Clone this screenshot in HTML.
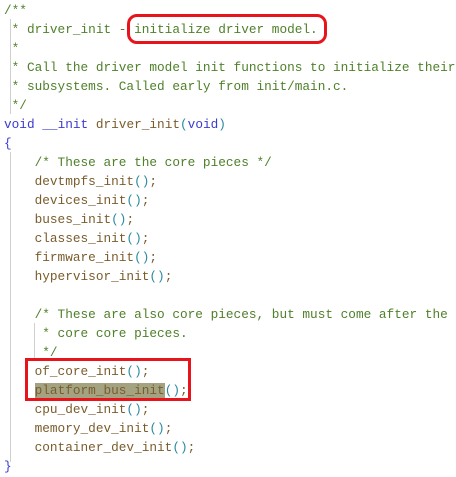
<!DOCTYPE html>
<html><head><meta charset="utf-8">
<style>
html,body{margin:0;padding:0;background:#fff;width:456px;height:477px;overflow:hidden;}
body{position:relative;font-family:"Liberation Mono",monospace;font-size:12.75px;}
.l{position:absolute;left:4px;white-space:pre;height:19px;line-height:19px;color:#7a5c2c;top:1px}
.c{color:#4f802a;}
.k{color:#3b3bd0;}
.p{color:#2a8aa0;}
.g{position:absolute;width:1px;background:#d0d0d0;}
.box{position:absolute;border:3px solid #e8141c;box-sizing:border-box;}
.hl{background:#a3a382;}
</style></head><body>
<div class="g" style="left:10px;top:19px;height:95px"></div>
<div class="g" style="left:10px;top:152px;height:310px"></div>
<div class="g" style="left:34px;top:323px;height:38px"></div>
<div class="l c" style="top:1px">/**</div>
<div class="l c" style="top:20px"> * driver_init - initialize driver model.</div>
<div class="l c" style="top:39px"> *</div>
<div class="l c" style="top:58px"> * Call the driver model init functions to initialize their</div>
<div class="l c" style="top:77px"> * subsystems. Called early from init/main.c.</div>
<div class="l c" style="top:96px"> */</div>
<div class="l" style="top:115px"><span class="k">void</span> <span class="k">__init</span> driver_init<span class="p">(</span><span class="k">void</span><span class="p">)</span></div>
<div class="l k" style="top:134px">{</div>
<div class="l c" style="top:153px">    /* These are the core pieces */</div>
<div class="l" style="top:172px">    devtmpfs_init<span class="p">()</span>;</div>
<div class="l" style="top:191px">    devices_init<span class="p">()</span>;</div>
<div class="l" style="top:210px">    buses_init<span class="p">()</span>;</div>
<div class="l" style="top:229px">    classes_init<span class="p">()</span>;</div>
<div class="l" style="top:248px">    firmware_init<span class="p">()</span>;</div>
<div class="l" style="top:267px">    hypervisor_init<span class="p">()</span>;</div>
<div class="l c" style="top:305px">    /* These are also core pieces, but must come after the</div>
<div class="l c" style="top:324px">     * core core pieces.</div>
<div class="l c" style="top:343px">     */</div>
<div class="l" style="top:362px">    of_core_init<span class="p">()</span>;</div>
<div class="l" style="top:381px">    <span class="hl">platform_bus_init</span><span class="p">()</span>;</div>
<div class="l" style="top:400px">    cpu_dev_init<span class="p">()</span>;</div>
<div class="l" style="top:419px">    memory_dev_init<span class="p">()</span>;</div>
<div class="l" style="top:438px">    container_dev_init<span class="p">()</span>;</div>
<div class="l k" style="top:457px">}</div>
<div class="box" style="left:127px;top:14px;width:200px;height:30px;border-radius:10px"></div>
<div class="box" style="left:25px;top:358px;width:166px;height:43px"></div>
</body></html>
